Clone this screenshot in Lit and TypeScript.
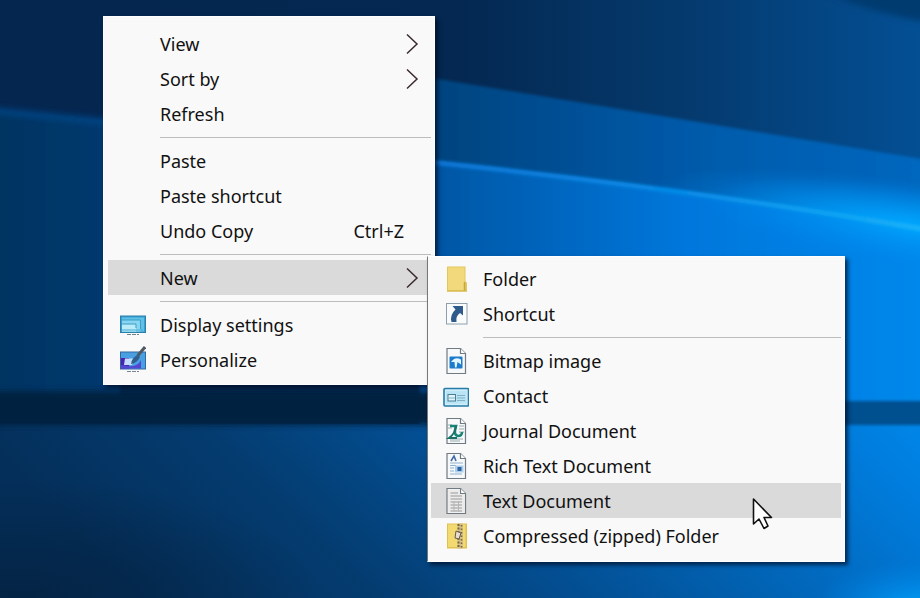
import { LitElement, html, svg, css, nothing, TemplateResult, SVGTemplateResult } from "lit";
import { customElement, property } from "lit/decorators.js";

type Entry = { label: string; icon?: string; hint?: string; more?: boolean; active?: boolean } | "line";

const page = svg`<path d="M4 1.500H17.500l5 5V26.500H4Z" fill="#f6f8fa" stroke="#6f7a82" stroke-width="1.200"/><path d="M17.500 1.500V6.500H22.500" fill="#fff" stroke="#6f7a82" stroke-width="1.200"/>`;

const icons: Record<string, SVGTemplateResult> = {
  display: svg`<rect x="0.500" y="5" width="25" height="16.500" fill="#3a9fd0" stroke="#2b7fa8"/>
    <rect x="2" y="6.500" width="22" height="14" fill="#5fc0e8"/><path d="M2 9H20.500V20.500H2Z" fill="#86d6f3"/><path d="M2 13H16V20.500H2Z" fill="#b9ebf8"/>
    <path d="M2 9H20.500V18M2 13H16V17" fill="none" stroke="#3c9cc6"/><path d="M2 19H23" stroke="#4aa9d2"/><path d="M7 23.500H19" stroke="#6d828b" stroke-dasharray="4 1"/>`,
  personalize: svg`<rect x="0.500" y="6" width="25" height="17" fill="#48a0e2" stroke="#31699e"/>
    <path d="M1 12H9V22.500H1Z" fill="#4a22b4"/><path d="M8 20Q18 21 21 14V22.500H1V19Z" fill="#5546d2"/><path d="M5 12.500H14L12 19H4Z" fill="#c4dcff"/>
    <path d="M25 1L17.500 10" stroke="#4e5964" stroke-width="3"/><path d="M18 9Q12 11 11 18Q17 17 20 11Z" fill="#315e8c"/><path d="M7 25.500H19" stroke="#7c858d" stroke-dasharray="4 1"/>`,
  folder: svg`<path d="M4 1.500H22.500V16L24 18V26.500H4Z" fill="#e3c75c"/><path d="M5 2.500H21.500V25H5Z" fill="#f2da7c"/><path d="M21.500 17V26" stroke="#c7a941" stroke-width="1.500"/><path d="M4 26H24" stroke="#d4b64a"/>`,
  shortcut: svg`<rect x="3.500" y="3.500" width="20.500" height="20.500" fill="#f9fbfd" stroke="#8fa0ad"/><path d="M9.500 6H20V15.500L17 13Q12.500 16 13.500 22H8.500Q6.500 15 12.500 9.500Z" fill="#2f5a8c"/>`,
  bitmap: svg`${page}<rect x="6.500" y="9.500" width="13" height="12" rx="1" fill="#1c7ccb"/><path d="M8 15Q12 9 18 12.500L18 17.500L14.500 15L13.500 20.500H12L11.500 15Z" fill="#e1f6ff"/>`,
  contact: svg`<rect x="1" y="6.500" width="24.500" height="17.500" rx="1" fill="#cdeefa" stroke="#267ba8" stroke-width="1.600"/><path d="M3 9H23.500V21.500H3Z" fill="#b9e4f5"/><rect x="5" y="12.500" width="7.500" height="6.500" fill="#e0f4fb" stroke="#4b7f96"/><path d="M6 16H12M14 13.500H22M14 16H22M14 18.500H22" stroke="#7fb0c4"/>`,
  journal: svg`${page}<path d="M3 8H9M3 11H9M16 9H21M16 12H21M16 15H21M7 22H20M7 24H17" stroke="#96aaa9"/><path d="M7 9H13Q10 18 15 19Q19 19 19 15" fill="none" stroke="#168477" stroke-width="2.500"/><path d="M13 9Q12 17 6 21H14" fill="none" stroke="#187265" stroke-width="2"/>`,
  rich: svg`${page}<path d="M8 9L11 4L13 9" fill="none" stroke="#3d6ca8" stroke-width="1.600"/><path d="M7 11H20M7 13.500H13M7 16H11M7 19H11M7 22H19" stroke="#8fb2d0"/><rect x="12" y="13.500" width="8.500" height="7" fill="#a9cfee"/><path d="M14.500 15H18.500V19H14.500Z" fill="#2f629f"/>`,
  text: svg`${page}<path d="M5 2.500H17V7H21.500V25.500H5Z" fill="#ebebeb"/><path d="M7.500 6H15M7.500 9H19M7.500 12H19M7.500 15H19M7.500 18H19M7.500 21H19M7.500 24H19" stroke="#999"/><path d="M11 14V24M15.500 14V24" stroke="#b5b5b5"/>`,
  zip: svg`<path d="M4 1.500H24V26.500H4Z" fill="#e2c050"/><path d="M5 2.500H22.500V25H5Z" fill="#f2d970"/><path d="M14.500 1.500H20V26.500H14.500Z" fill="#d7c083"/><path d="M15.500 2V26" stroke="#756546" stroke-width="2" stroke-dasharray="2 1.500"/><path d="M18.500 3V26" stroke="#756546" stroke-width="1.600" stroke-dasharray="1.500 2"/><path d="M13 9L18 11L16 17L12 16Z" fill="#e8ded0" stroke="#66594d"/>`,
};

const mainEntries: Entry[] = [
  { label: "View", more: true }, { label: "Sort by", more: true }, { label: "Refresh" }, "line",
  { label: "Paste" }, { label: "Paste shortcut" }, { label: "Undo Copy", hint: "Ctrl+Z" }, "line",
  { label: "New", more: true, active: true }, "line",
  { label: "Display settings", icon: "display" }, { label: "Personalize", icon: "personalize" },
];
const newEntries: Entry[] = [
  { label: "Folder", icon: "folder" }, { label: "Shortcut", icon: "shortcut" }, "line",
  { label: "Bitmap image", icon: "bitmap" }, { label: "Contact", icon: "contact" },
  { label: "Journal Document", icon: "journal" }, { label: "Rich Text Document", icon: "rich" },
  { label: "Text Document", icon: "text", active: true }, { label: "Compressed (zipped) Folder", icon: "zip" },
];

@customElement("context-menu")
class ContextMenu extends LitElement {
  @property({ attribute: false }) entries: Entry[] = [];

  static styles = css`
    :host { display: block; box-sizing: border-box; padding: 4px; background: #f9f9f9; border: 1px solid #fff; box-shadow: 3px 3px 4px rgba(0, 12, 35, 0.7); }
    .menu { display: flex; flex-direction: column; }
    .item { display: flex; align-items: center; height: 35px; padding: 0 12px; border: 0; background: transparent; color: #111; font: 18px/24px "Noto Sans", sans-serif; text-align: left; }
    .item.active { background: #dadada; }
    .icon { flex: none; width: 26px; height: 28px; margin-right: 14px; }
    .label { flex: 1; white-space: nowrap; }
    .hint { margin-right: 15px; }
    .arrow { width: 14px; height: 22px; fill: none; stroke: #3a2a30; stroke-width: 1.5; }
    .line { height: 1px; margin: 6px 0 5px 52px; border: 0; background: #bdbdbd; }
  `;

  private row(e: Entry): TemplateResult {
    if (e === "line") return html`<hr class="line">`;
    return html`<button class="item ${e.active ? "active" : ""}" role="menuitem">
      <svg class="icon" viewBox="0 0 26 28" aria-hidden="true">${e.icon ? icons[e.icon] : nothing}</svg>
      <span class="label">${e.label}</span>
      ${e.hint ? html`<span class="hint">${e.hint}</span>` : nothing}
      ${e.more ? html`<svg class="arrow" viewBox="0 0 14 22" aria-hidden="true"><path d="M2 1.500L12 11L2 20.500"/></svg>` : nothing}
    </button>`;
  }

  render() {
    return html`<div class="menu" role="menu">${this.entries.map((e) => this.row(e))}</div>`;
  }
}

@customElement("app-root")
class AppRoot extends LitElement {
  static styles = css`
    :host { display: block; position: relative; min-height: 100vh; overflow: hidden; background: #00346d; }
    .wallpaper { position: absolute; inset: 0; width: 100%; height: 100%; }
    .main { position: absolute; left: 103px; top: 16px; width: 332px; padding: 9px 3px 7px 4px; }
    .sub { position: absolute; left: 427px; top: 256px; width: 418px; padding: 4px 3px 8px 3px; border-color: #fff #fff #fff #777; }
    .pointer { position: absolute; left: 751px; top: 497px; width: 22px; height: 34px; }
  `;

  render() {
    return html`
      <svg class="wallpaper" viewBox="0 0 920 598" preserveAspectRatio="none" aria-hidden="true">
        <defs>
          <linearGradient id="top"><stop offset="0" stop-color="#04264f"/><stop offset=".5" stop-color="#042851"/><stop offset=".75" stop-color="#053a6e"/><stop offset="1" stop-color="#034f94"/></linearGradient>
          <linearGradient id="left"><stop offset="0" stop-color="#04335f"/><stop offset="1" stop-color="#033a70"/></linearGradient>
          <linearGradient id="ray"><stop offset="0" stop-color="#04427c"/><stop offset=".5" stop-color="#0359a8"/><stop offset="1" stop-color="#0068c0"/></linearGradient>
          <linearGradient id="beam"><stop offset="0" stop-color="#0354a0"/><stop offset=".5" stop-color="#0076db"/><stop offset="1" stop-color="#0089ec"/></linearGradient>
          <linearGradient id="edge"><stop offset="0" stop-color="#0a74d4"/><stop offset=".5" stop-color="#068be8"/><stop offset="1" stop-color="#16b4fb"/></linearGradient>
          <linearGradient id="band"><stop offset="0" stop-color="#03203f"/><stop offset=".45" stop-color="#04204a"/><stop offset=".9" stop-color="#024f94"/><stop offset="1" stop-color="#034f92"/></linearGradient>
          <linearGradient id="floor" x1="0" y1="0.200" x2="1" y2="0"><stop offset="0" stop-color="#042f5a"/><stop offset=".25" stop-color="#043c70"/><stop offset=".46" stop-color="#034e92"/><stop offset=".9" stop-color="#007bdb"/><stop offset="1" stop-color="#0086e8"/></linearGradient>
          <radialGradient id="glow"><stop offset="0" stop-color="#00a8ff" stop-opacity=".9"/><stop offset="1" stop-color="#0088ee" stop-opacity="0"/></radialGradient>
          <radialGradient id="shade"><stop offset="0" stop-color="#04213f" stop-opacity=".8"/><stop offset="1" stop-color="#04213f" stop-opacity="0"/></radialGradient>
          <filter id="soft" x="-20%" y="-50%" width="140%" height="200%"><feGaussianBlur stdDeviation="3"/></filter>
          <filter id="crisp" x="-5%" y="-20%" width="110%" height="140%"><feGaussianBlur stdDeviation="1.500"/></filter>
        </defs>
        <rect width="920" height="598" fill="url(#top)"/>
        <path d="M820 -10H940V24Q870 14 820 -10Z" fill="#033a70" filter="url(#soft)"/>
        <path d="M-20 108L120 122V420H-20Z" fill="url(#left)" filter="url(#crisp)"/>
        <path d="M-20 109L120 123" stroke="#04468a" stroke-width="5" filter="url(#soft)"/>
        <path d="M420 76L940 162V430H420Z" fill="url(#ray)" filter="url(#crisp)"/>
        <ellipse cx="900" cy="225" rx="250" ry="46" fill="url(#glow)" transform="rotate(8 900 225)"/>
        <path d="M420 160Q700 190 940 233V430H420Z" fill="url(#beam)" filter="url(#crisp)"/>
        <ellipse cx="920" cy="228" rx="220" ry="40" fill="url(#glow)" transform="rotate(8 920 228)"/>
        <path d="M420 161Q700 190 940 232" fill="none" stroke="url(#edge)" stroke-width="5" filter="url(#crisp)"/>
        <rect y="424" width="920" height="180" fill="url(#floor)"/>
        <ellipse cx="20" cy="598" rx="300" ry="120" fill="url(#shade)"/>
        <ellipse cx="920" cy="610" rx="110" ry="50" fill="url(#glow)"/>
        <path d="M-20 391H440V425H-20Z" fill="#04203f" filter="url(#soft)"/>
        <path d="M438 401H940V425H438Z" fill="#03508f" filter="url(#crisp)"/>
      </svg>
      <context-menu class="main" .entries=${mainEntries}></context-menu>
      <context-menu class="sub" .entries=${newEntries}></context-menu>
      <svg class="pointer" viewBox="0 0 22 34" aria-hidden="true"><path d="M2.500 2L2.500 27L8 22L13 31.500L17 29L13 20.500H20.500Z" fill="#fff" stroke="#111" stroke-width="1.600" stroke-linejoin="round"/></svg>
    `;
  }
}
